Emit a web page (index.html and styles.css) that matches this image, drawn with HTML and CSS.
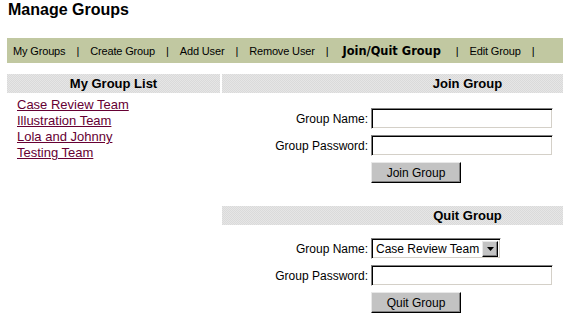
FILE: index.html
```html
<!DOCTYPE html>
<html lang="en">
  <head>
    <meta charset="UTF-8" />
    <title>Manage Groups</title>
    <link rel="stylesheet" href="styles.css">
  </head>
  <body>
    <h1 class="title">Manage Groups</h1>
    <div class="nav">
      <a href="#">My Groups</a><span class="sep">|</span>
      <a href="#">Create Group</a><span class="sep">|</span>
      <a href="#">Add User</a><span class="sep">|</span>
      <a href="#">Remove User</a><span class="sep">|</span>
      <a href="#" class="current">Join/Quit Group</a><span class="sep">|</span>
      <a href="#">Edit Group</a><span class="sep">|</span>
    </div>
    <div class="main">
      <div class="list-col">
        <div class="head">My Group List</div>
        <ul class="groups">
          <li><a href="#">Case Review Team</a></li>
          <li><a href="#">Illustration Team</a></li>
          <li><a href="#">Lola and Johnny</a></li>
          <li><a href="#">Testing Team</a></li>
        </ul>
      </div>
      <div class="form-col">
        <div class="head offset">Join Group</div>
        <form class="form">
          <label>Group Name:</label>
          <input type="text" class="field">
          <label>Group Password:</label>
          <input type="password" class="field">
          <span></span>
          <button type="button" class="btn">Join Group</button>
        </form>
        <div class="head offset quit">Quit Group</div>
        <form class="form">
          <label>Group Name:</label>
          <div class="select">
            <span class="select-text">Case Review Team</span>
            <span class="select-arrow">
              <svg width="7" height="4" viewBox="0 0 7 4"><path d="M0 0h7L3.5 4z" fill="#000"/></svg>
            </span>
          </div>
          <label>Group Password:</label>
          <input type="password" class="field">
          <span></span>
          <button type="button" class="btn">Quit Group</button>
        </form>
      </div>
    </div>
  </body>
</html>
```

FILE: styles.css
```css
* {
  margin: 0;
  padding: 0;
  box-sizing: border-box;
}
body {
  font-family: "Liberation Sans", Arial, sans-serif;
  font-size: 12px;
  color: #000;
  background: #fff;
  padding: 0 2px 0 7px;
}
.title {
  font-size: 16px;
  font-weight: bold;
  line-height: 18px;
  margin-top: 1px;
  padding-left: 1px;
}
.nav {
  margin-top: 19px;
  height: 25px;
  background-color: #c1c8a1;
  display: flex;
  align-items: center;
  padding-left: 6px;
  font-size: 11px;
  letter-spacing: -0.15px;
}
.nav a {
  color: #000;
  text-decoration: none;
}
.nav .sep {
  margin: 0 11px;
}
.nav a.current {
  font-family: "DejaVu Sans", Verdana, sans-serif;
  font-weight: bold;
  font-size: 11.4px;
  letter-spacing: 0;
  margin: 0 4px 0 3px;
}
.main {
  margin-top: 11px;
  display: flex;
  gap: 2px;
}
.list-col {
  width: 213px;
}
.form-col {
  flex: 1;
}
.head {
  height: 19px;
  line-height: 19px;
  font-size: 13px;
  font-weight: bold;
  text-align: center;
  background-color: #e0e0e0;
  background-image: repeating-conic-gradient(#e6e6e6 0 25%, #dadada 0 50%);
  background-size: 2px 2px;
}
.head.offset {
  padding-left: 150px;
}
.head.quit {
  margin-top: 23px;
}
.groups {
  list-style: none;
  margin-top: 4px;
  padding-left: 10px;
  font-size: 13px;
  line-height: 16px;
}
.groups a {
  color: #660033;
}
.form {
  display: grid;
  grid-template-columns: 1fr 182px;
  column-gap: 3px;
  row-gap: 6px;
  align-items: center;
  padding-right: 10px;
  margin-top: 15px;
}
.quit + .form {
  margin-top: 13px;
}
.form label {
  text-align: right;
}
.field {
  height: 21px;
  width: 182px;
  border: 1px solid;
  border-color: #808080 #fff #fff #808080;
  box-shadow: inset 1px 1px 0 #000, inset -1px -1px 0 #d4d0c8;
  font: 12px "Liberation Sans", Arial, sans-serif;
  padding: 0 3px;
  outline: none;
}
.select {
  width: 130px;
  height: 21px;
  display: flex;
  align-items: center;
  border: 1px solid;
  border-color: #808080 #fff #fff #808080;
  box-shadow: inset 1px 1px 0 #000, inset -1px -1px 0 #d4d0c8;
  padding: 2px 2px 2px 4px;
}
.select-text {
  flex: 1;
  font-size: 12px;
  white-space: nowrap;
}
.select-arrow {
  width: 16px;
  height: 16px;
  background: #c3c3c3;
  border: 1px solid;
  border-color: #e8e8e8 #000 #000 #e8e8e8;
  box-shadow: inset -1px -1px 0 #808080;
  display: flex;
  align-items: center;
  justify-content: center;
}
.btn {
  width: 90px;
  height: 21px;
  background: #c3c3c3;
  border: 1px solid;
  border-color: #e8e8e8 #000 #000 #e8e8e8;
  box-shadow: inset -1px -1px 0 #808080;
  font: 12px "Liberation Sans", Arial, sans-serif;
  color: #000;
}
```
